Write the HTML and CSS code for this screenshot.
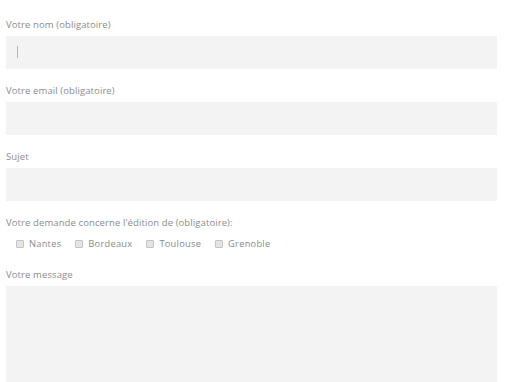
FILE: index.html
```html
<!DOCTYPE html>
<html lang="fr">
<head>
  <meta charset="UTF-8">
  <title>Contact</title>
  <meta name="viewport" content="width=device-width,initial-scale=1">
  <link rel="stylesheet" href="styles.css">
</head>
<body>

<form class="contact">
  <div class="group">
    <label class="lbl" for="nom">Votre nom (obligatoire)</label>
    <div class="field-wrap">
      <input class="field" id="nom" type="text">
      <span class="caret"></span>
    </div>
  </div>

  <div class="group">
    <label class="lbl" for="email">Votre email (obligatoire)</label>
    <input class="field" id="email" type="email">
  </div>

  <div class="group">
    <label class="lbl" for="sujet">Sujet</label>
    <input class="field" id="sujet" type="text">
  </div>

  <div class="group">
    <div class="lbl">Votre demande concerne l'édition de (obligatoire):</div>
    <div class="checks">
      <label class="check"><span class="box"></span>Nantes</label>
      <label class="check"><span class="box"></span>Bordeaux</label>
      <label class="check"><span class="box"></span>Toulouse</label>
      <label class="check"><span class="box"></span>Grenoble</label>
    </div>
  </div>

  <div class="group">
    <label class="lbl" for="msg">Votre message</label>
    <textarea class="field area" id="msg"></textarea>
  </div>
</form>

</body>
</html>
```

FILE: styles.css
```css
body { margin:0; padding:18px 13px 0 6px; height:382px; box-sizing:border-box; background:#fff; font-family:'Open Sans','Liberation Sans',sans-serif; color:#8a8a8a; overflow:hidden; }
.contact { display:flex; flex-direction:column; }
.group { margin-bottom:15px; }
.lbl { display:block; font-size:9.5px; line-height:13px; margin-bottom:5px; color:#8c8c8c; letter-spacing:0.1px; }
.field { display:block; width:100%; height:33px; box-sizing:border-box; border:0; background:#f3f3f3; outline:none; padding:0 11px; margin:0; font:inherit; }
.field-wrap { position:relative; }
.caret { position:absolute; left:11px; top:10px; width:1px; height:12px; background:#b8b8b8; }
.area { height:100px; resize:none; }
.checks { display:flex; gap:14px; padding-left:10px; margin:8px 0 2px; }
.check { display:flex; align-items:center; gap:5px; font-size:9.3px; line-height:14px; color:#8a8a8a; letter-spacing:0.25px; }
.box { width:6px; height:6px; border:1px solid #c4c4c4; background:#e4e4e4; border-radius:1px; }
```
